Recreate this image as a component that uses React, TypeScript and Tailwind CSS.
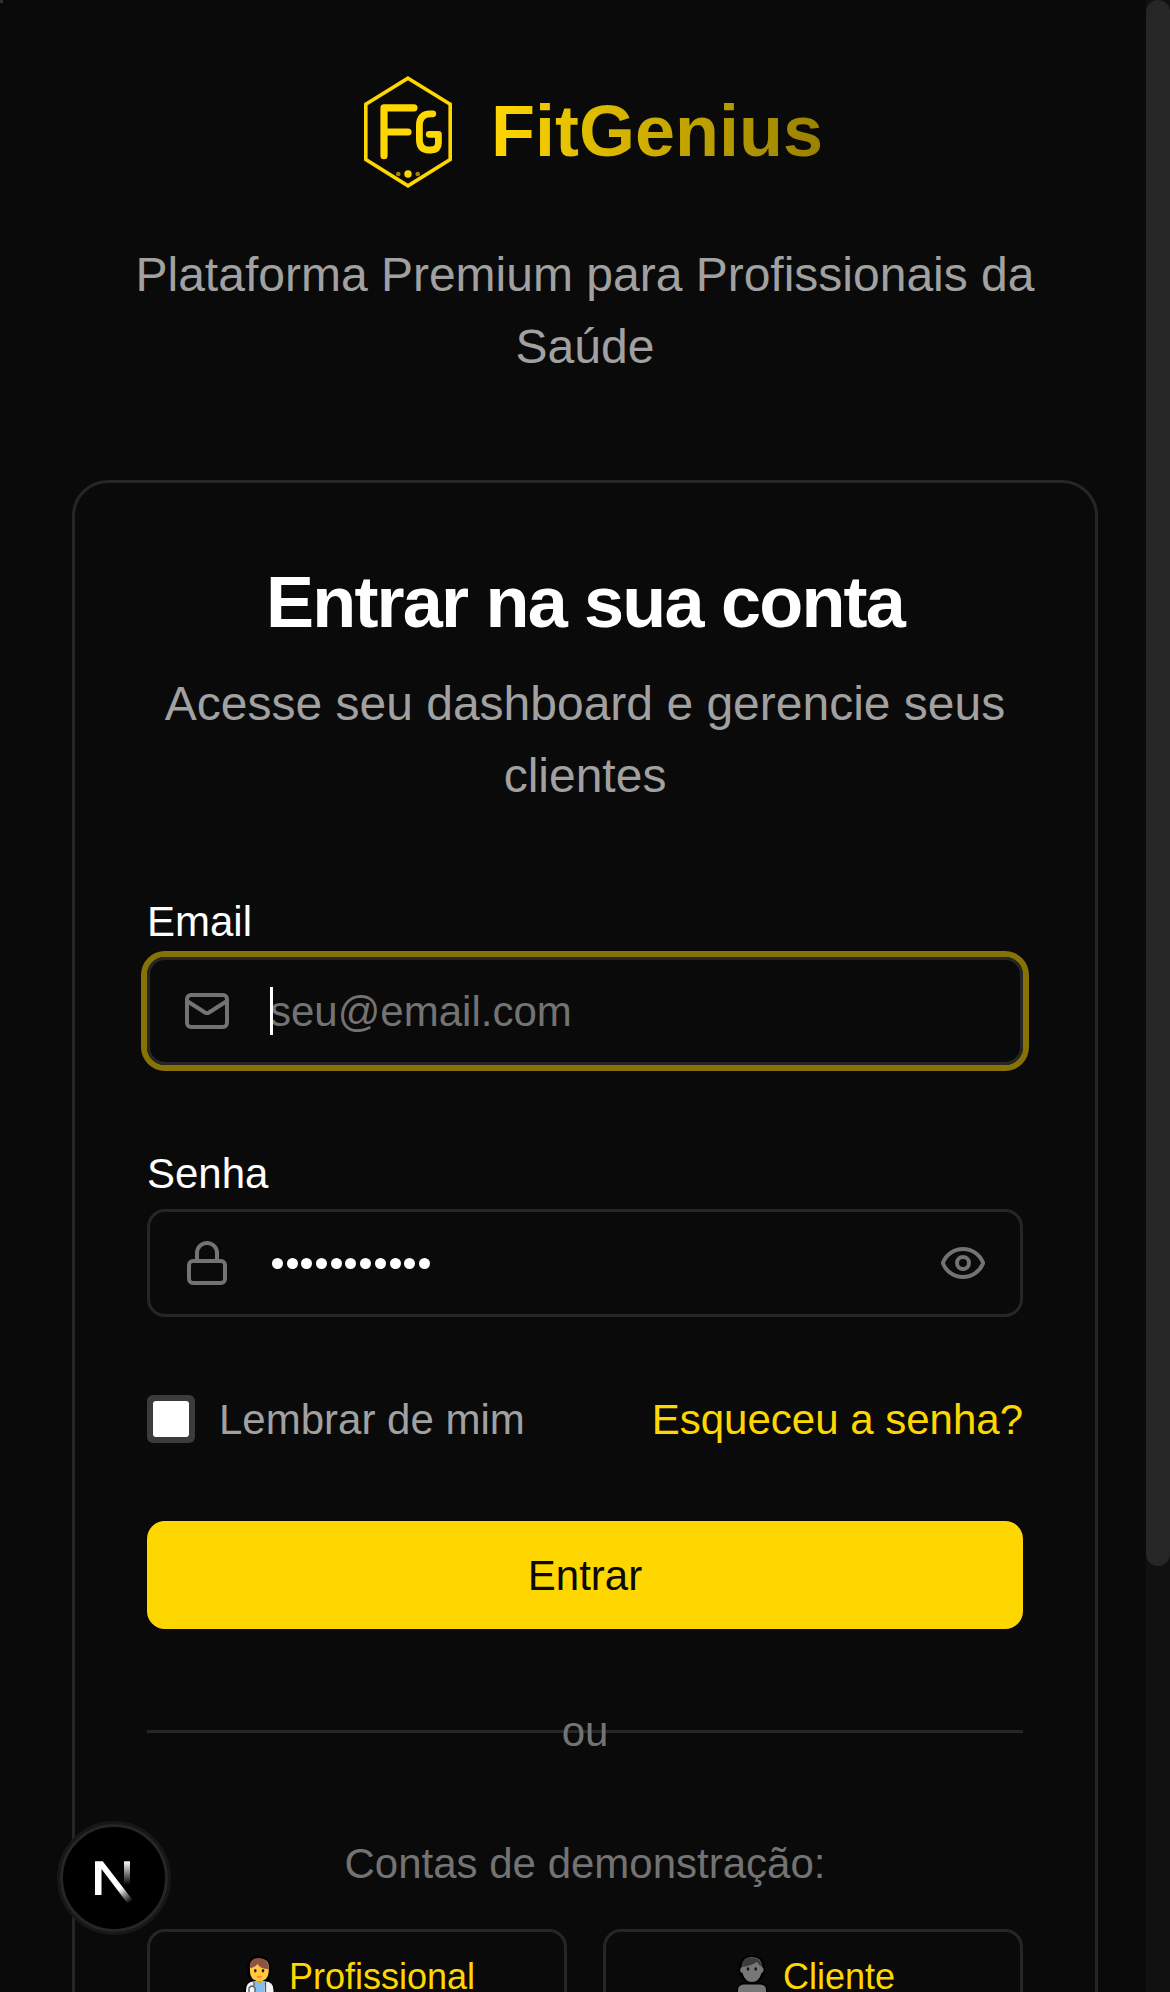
import { Eye, Lock, Mail } from "lucide-react";

function Logo() {
  return (
    <svg viewBox="347 72 120 120" className="h-[120px] w-[120px]" fill="none" stroke="#ffd700" strokeLinecap="round" strokeLinejoin="round">
      <path d="M408 78.2 450.2 104.2V159.6L408 185.8 365.8 159.6V104.2Z" strokeWidth="3.6" strokeLinejoin="miter" />
      <path d="M384 155.7V107.8H414M384 132H408" strokeWidth="7.2" />
      <path d="M432.8 113.8H430Q419.6 114.2 419.4 125V140Q419.6 150 429 150H431Q438.4 149.8 438.4 143V134.3H429.2" strokeWidth="6.8" />
      <g fill="#ffd700" stroke="none">
        <circle cx="408" cy="174" r="3.7" />
        <circle cx="398.3" cy="174" r="2.3" opacity=".6" />
        <circle cx="417.7" cy="174" r="2.3" opacity=".6" />
      </g>
    </svg>
  );
}

function DoctorIcon() {
  return (
    <svg viewBox="240 1954 40 50" className="mt-px h-[50px] w-[40px] shrink-0">
      <path d="M249.500 1974C245 1952 273 1952 269 1974Q267 1983 259 1983T249.500 1974M246 2004V1991Q246 1982 259 1982T273 1991V2004Z" fill="#000" stroke="#000" strokeWidth="4" />
      <path d="M246 2004V1990Q246 1981.500 254 1981.500H265Q273.500 1981.500 273.500 1990V2004Z" fill="#f1f3f5" />
      <path d="M254 1981H265L263.500 2004H255.500Z" fill="#83bdec" />
      <path d="M256 1978H263V1981Q259.500 1985 256 1981Z" fill="#e8a629" />
      <path d="M250 1966Q250 1959 259.300 1959T268.700 1966V1972Q268 1981 259.300 1981T250 1972Z" fill="#ffc83d" />
      <path d="M249.800 1968V1965Q251 1958 258.500 1958Q268.500 1958 268.700 1969Q260 1969 257.500 1964Q254 1968 249.800 1968Z" fill="#8c5543" />
      <ellipse cx="255.300" cy="1970.700" rx="1.300" ry="1.700" fill="#222" />
      <ellipse cx="263" cy="1970.700" rx="1.300" ry="1.700" fill="#222" />
      <path d="M257 1976.500Q259 1977.500 261.500 1976.500" stroke="#f0701f" strokeWidth="1.200" fill="none" />
      <path d="M249 1992V1988Q252 1984 255 1988V1992M254 1982V1986M265.500 1982V1992" stroke="#555d66" strokeWidth="1.300" fill="none" />
    </svg>
  );
}

function PersonIcon() {
  return (
    <svg viewBox="732 1954 40 50" className="mt-px h-[50px] w-[40px] shrink-0">
      <path d="M740 1970C738 1952 765 1952 763.500 1970Q764 1979 752 1982Q741 1979 740 1970M738 2004V1992Q738 1984 746 1984H758Q766 1984 766 1992V2004Z" fill="#000" stroke="#000" strokeWidth="3" />
      <path d="M738 2004V1990Q738 1984.500 745 1984.500H759Q766 1984.500 766 1990V2004Z" fill="#777" />
      <path d="M742 1967Q742 1957 752 1957T762 1967Q764.500 1968 763 1972L761.500 1973Q759 1982 752 1982T742.500 1973L740.500 1972Q739.500 1968 742 1967Z" fill="#777" />
      <path d="M741.500 1967Q741.500 1957.500 752 1957.500Q757 1957.500 759 1960Q753 1966 741.500 1967M758 1959.500Q762 1962 762.500 1967Q759.500 1966 757 1962Z" fill="#3d3d3d" />
      <ellipse cx="748" cy="1969" rx="1.300" ry="1.700" fill="#111" />
      <ellipse cx="755.700" cy="1969" rx="1.300" ry="1.700" fill="#111" />
    </svg>
  );
}

function DevBadge() {
  return (
    <div className="fixed top-[1821px] left-[57px] flex size-[114px] items-center justify-center rounded-full border-[3px] border-[#171717]">
      <div className="size-[108px] rounded-full border-[3px] border-[#262626] bg-black">
        <svg viewBox="63 1827 102 102" className="size-[102px]">
          <defs>
            <linearGradient id="diag" x1="121" y1="1888" x2="131" y2="1902" gradientUnits="userSpaceOnUse">
              <stop stopColor="#fff" />
              <stop offset="1" stopColor="#fff" stopOpacity="0" />
            </linearGradient>
            <linearGradient id="stem" x1="127" y1="1861" x2="127" y2="1885" gradientUnits="userSpaceOnUse">
              <stop stopColor="#fff" />
              <stop offset="1" stopColor="#fff" stopOpacity="0" />
            </linearGradient>
          </defs>
          <path d="M95 1895V1861.300H102.700L133 1900.500 128 1904 101.500 1869V1895Z" fill="url(#diag)" />
          <path d="M124 1861.300H130V1886H124Z" fill="url(#stem)" />
        </svg>
      </div>
    </div>
  );
}

const PASSWORD_LENGTH = 11;

const inputClass =
  "block h-[108px] w-full rounded-[18px] border-[3px] border-[#262626] bg-transparent px-[120px] pt-0.5 text-[42px] text-white outline-none placeholder:text-[#737373] placeholder:opacity-100";

export default function App() {
  return (
    <div className='relative h-[1992px] w-full overflow-hidden bg-[#0a0a0a] px-[72px] pt-[72px] font-["Liberation_Sans",Arial,sans-serif] text-white'>
      <header className="flex h-[408px] flex-col items-center">
        <div className="flex h-[120px] items-center gap-6">
          <Logo />
          <h1 className="mb-0.5 bg-linear-to-r from-[#ffd700] to-[#998100] bg-clip-text text-[72px] leading-[96px] font-bold text-transparent">FitGenius</h1>
        </div>
        <p className="mt-[47px] text-center text-[48px] leading-[72px] text-[#a1a1a1]">Plataforma Premium para Profissionais da Saúde</p>
      </header>

      <main className="h-[1700px] rounded-[36px] border-[3px] border-[#262626] p-[72px]">
        <h2 className="mt-[-1px] text-center text-[72px] leading-[96px] font-bold tracking-[-1.8px]">Entrar na sua conta</h2>
        <p className="mt-[18px] text-center text-[48px] leading-[72px] text-[#a1a1a1]">Acesse seu dashboard e gerencie seus clientes</p>

        <form className="mt-[80px]">
          <label className="block text-[42px] leading-[60px]">Email</label>
          <div className="relative mt-[5px] rounded-[18px] ring-[6px] ring-[#867205]">
            <Mail size={48} className="absolute top-[30px] left-[36px] text-[#737373]" />
            <input className={inputClass} placeholder="seu@email.com" />
            <span className="absolute top-[30px] left-[123px] h-12 w-[3px] bg-white" />
          </div>

          <label className="mt-[79px] block text-[42px] leading-[60px]">Senha</label>
          <div className="relative mt-[5px] flex h-[108px] items-center rounded-[18px] border-[3px] border-[#262626] px-[33px]">
            <Lock size={48} className="shrink-0 text-[#737373]" />
            <div className="ml-[41px] flex flex-1 gap-[3.7px]">
              {Array.from({ length: PASSWORD_LENGTH }, (_, i) => (
                <span key={i} className="size-[11px] rounded-full bg-white" />
              ))}
            </div>
            <Eye size={48} className="shrink-0 text-[#737373]" />
          </div>

          <div className="mt-[72px] flex h-[60px] items-center justify-between text-[42px] leading-[60px]">
            <label className="flex items-center gap-6 text-[#a1a1a1]">
              <span className="size-12 rounded-[6px] bg-[#3b3b3b] p-[6px]">
                <span className="block size-full rounded-[3px] bg-white" />
              </span>
              <span className="mt-0.5">Lembrar de mim</span>
            </label>
            <a className="mt-0.5 text-[#ffd700]">Esqueceu a senha?</a>
          </div>

          <button type="button" className="mt-[72px] flex h-[108px] w-full items-center justify-center rounded-[18px] bg-[#ffd700] pt-0.5 text-[42px] leading-[60px] text-[#0a0a0a]">Entrar</button>
        </form>

        <div className="relative mt-[72px] flex h-[60px] justify-center">
          <div className="absolute inset-x-0 top-[29px] h-[3px] bg-[#262626]" />
          <span className="relative mt-px text-[42px] leading-[60px] text-[#737373]">ou</span>
        </div>

        <p className="mt-[73px] text-center text-[42px] leading-[60px] text-[#737373]">Contas de demonstração:</p>
        <div className="mt-[35px] grid grid-cols-2 gap-9 text-[36px] leading-[48px] text-[#ffd700]">
          <div className="flex h-[108px] items-start rounded-[18px] border-[3px] border-[#262626] pt-[21px] pl-[90px]">
            <DoctorIcon />
            <span className="ml-[9px]">Profissional</span>
          </div>
          <div className="flex h-[108px] items-start rounded-[18px] border-[3px] border-[#262626] pt-[21px] pl-[126px]">
            <PersonIcon />
            <span className="ml-[11px]">Cliente</span>
          </div>
        </div>
      </main>

      <div className="fixed top-0 right-0 h-full w-6 bg-[#111]">
        <div className="h-[1566px] rounded-full bg-[#262626]" />
      </div>
      <div className="fixed top-0 left-0 size-[3px] bg-[#333]" />
      <DevBadge />
    </div>
  );
}
